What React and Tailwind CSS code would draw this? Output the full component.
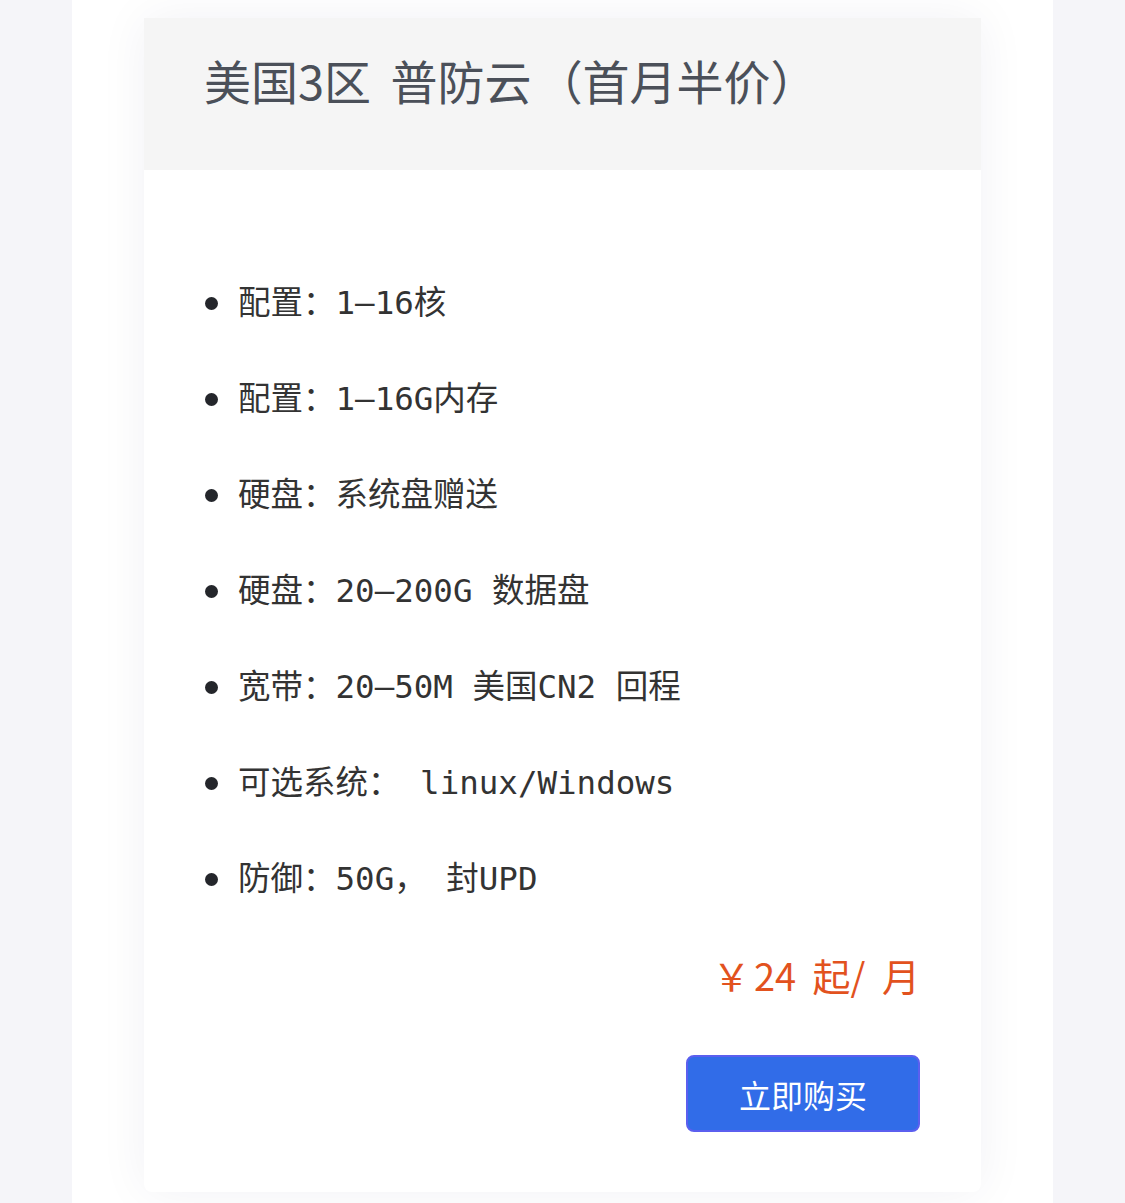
import React from 'react';

const specs = [
  '配置：1–16核',
  '配置：1–16G内存',
  '硬盘：系统盘赠送',
  '硬盘：20–200G 数据盘',
  '宽带：20–50M 美国CN2 回程',
  '可选系统： linux/Windows',
  '防御：50G， 封UPD',
];

function PlanCard() {
  return (
    <div className="w-[837px] rounded-b-lg bg-white shadow-[0_0_50px_rgba(40,40,80,0.06)]">
      {/* header */}
      <div className="h-[152px] bg-[#f5f5f5] pl-[60px] pt-[29px]">
        <h1
          className="text-[47px] leading-[66px] font-normal text-[#4b5059] [word-spacing:9px]"
          style={{ fontFamily: '"Noto Sans CJK SC", "Noto Sans", sans-serif' }}
        >
          美国3区 普防云<span className="ml-[4px]">（首月半价）</span>
        </h1>
      </div>

      <div className="px-[61px] pt-[85px] pb-[60px]">
        <ul
          className="text-[32.5px] leading-[96px] text-[#333333]"
          style={{ fontFamily: '"DejaVu Sans Mono", "Noto Sans CJK SC", monospace' }}
        >
          {specs.map(s => (
            <li key={s} className="flex items-center">
              <span className="w-[13px] h-[13px] rounded-full bg-[#24262b] mr-[20px]" />
              <span className="whitespace-pre">{s}</span>
            </li>
          ))}
        </ul>

        <div
          className="mt-[21px] text-right text-[38px] leading-[54px] text-[#e2521e]"
          style={{ fontFamily: '"Noto Sans CJK SC", "Noto Sans", sans-serif' }}
        >
          <span className="[word-spacing:-5px]">￥ </span>
          <span className="[word-spacing:8px]">24 起/ 月</span>
        </div>

        <div className="flex justify-end mt-[53px]">
          <button
            className="w-[234px] h-[77px] rounded-lg bg-[#316ce8] border-2 border-[#5b5fef] text-white text-[32px]"
            style={{ fontFamily: '"Noto Sans CJK SC", "Noto Sans", sans-serif' }}
          >
            立即购买
          </button>
        </div>
      </div>
    </div>
  );
}

export default function App() {
  return (
    <div className="min-h-screen bg-[#f5f5f9] flex justify-center">
      <div className="w-[981px] bg-white px-[72px] pt-[18px] pb-[10px]">
        <PlanCard />
      </div>
    </div>
  );
}
